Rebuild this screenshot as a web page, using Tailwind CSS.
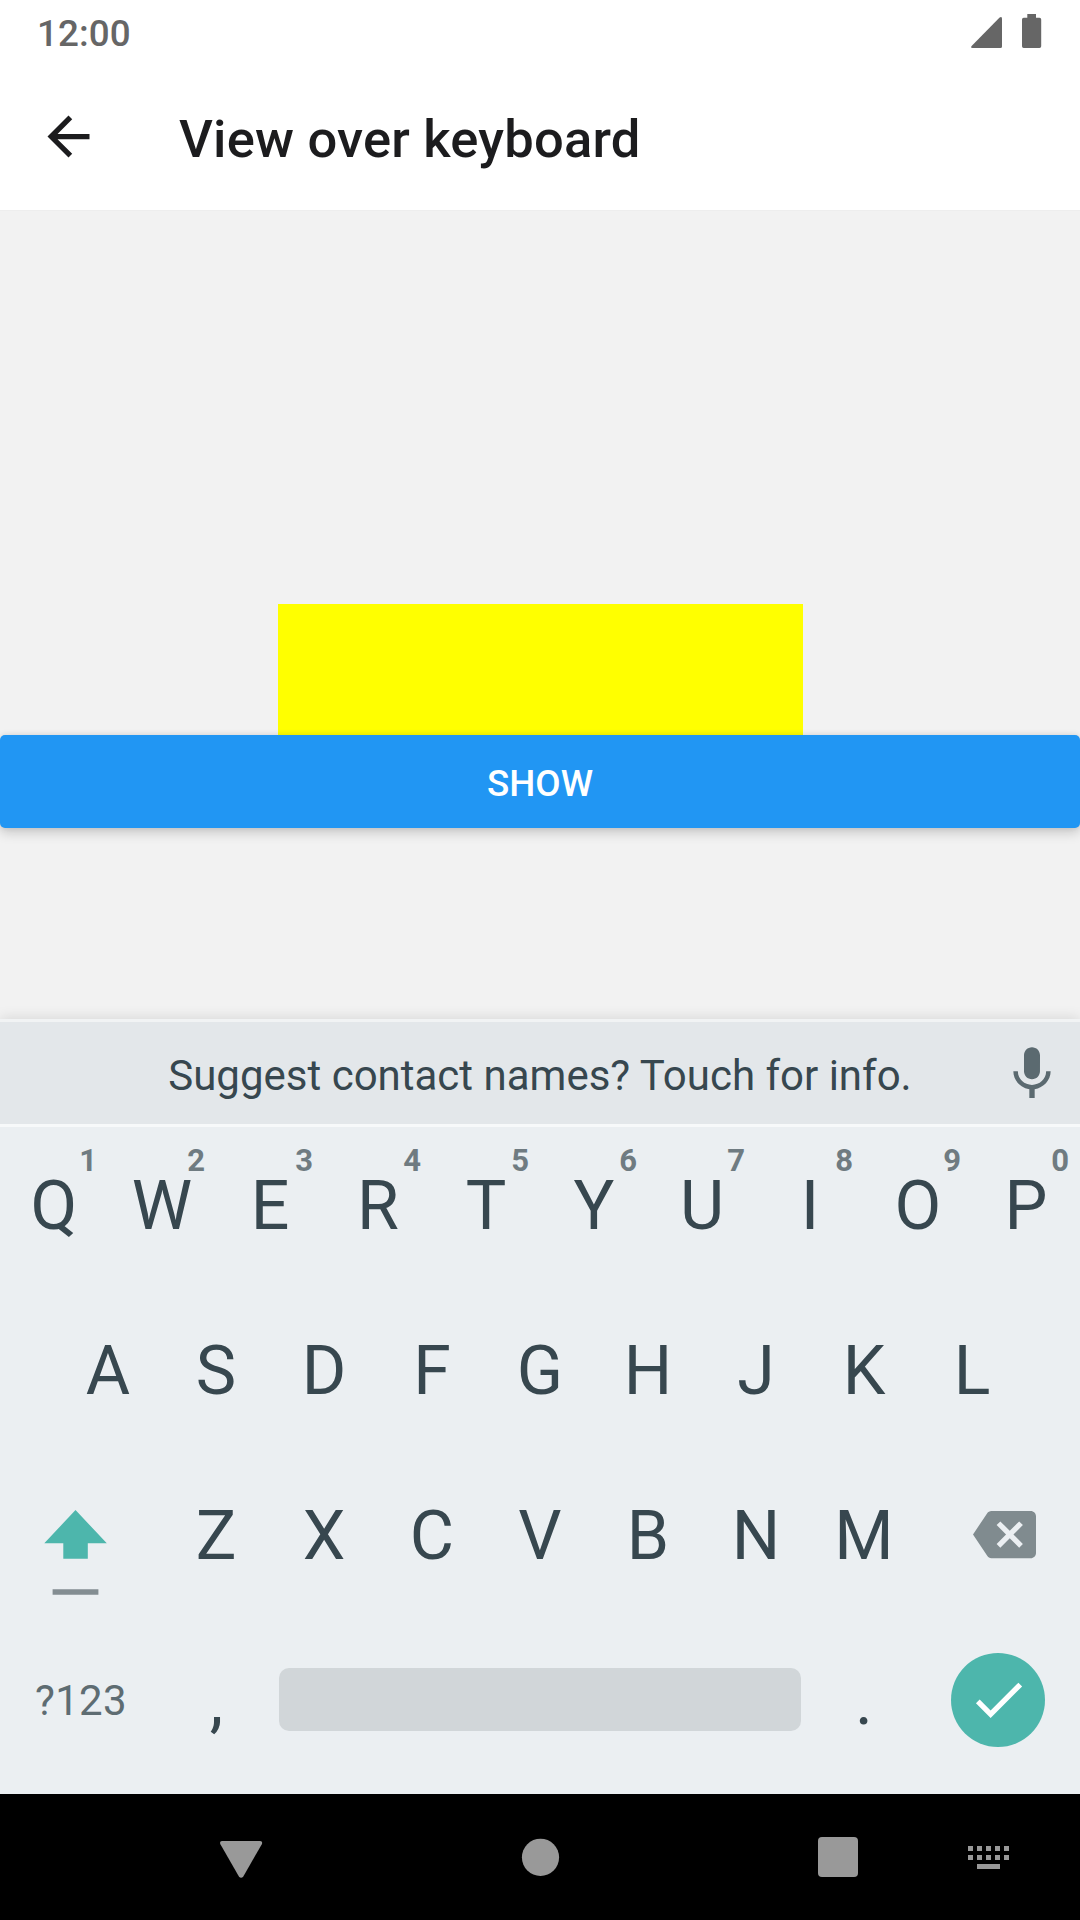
<!DOCTYPE html>
<html lang="en">
<head>
<meta charset="utf-8">
<title>View over keyboard</title>
<script src="https://cdn.jsdelivr.net/npm/@tailwindcss/browser@4"></script>
</head>
<body class="w-[1080px] h-[1920px] overflow-hidden flex flex-col bg-[#f2f2f2] font-[Roboto,sans-serif]">
  <!-- Status bar -->
  <div class="h-[63px] shrink-0 bg-white flex justify-between pl-[37px] pr-[38px]">
    <span class="text-[36.75px] leading-[67px] font-medium tracking-[0.1px] text-[#666]">12:00</span>
    <div class="flex items-start gap-[20px] pt-[14px]">
      <svg class="w-[31px] h-[31px] mt-[3px]" viewBox="0 0 31 31" fill="#666"><path d="M28.600.5Q31-.9 31 1.600V29.500Q31 31 29.500 31H1.600Q-.8 31 .6 29Z"/></svg>
      <svg class="w-[20px] h-[34px]" viewBox="0 0 20 34" fill="#666"><path d="M5.300 0h8.700v3.800H17.500a1.700 1.700 0 0 1 1.700 1.700v26.700A1.700 1.700 0 0 1 17.500 33.900H1.700A1.700 1.700 0 0 1 0 32.200V5.500A1.700 1.700 0 0 1 1.700 3.800h3.600z"/></svg>
    </div>
  </div>
  <!-- App bar -->
  <header class="h-[147px] shrink-0 bg-white flex items-center pl-[37px] gap-[79px]">
    <svg class="w-[63px] h-[63px]" viewBox="0 0 24 24" fill="#1c1c1e"><path d="M20 11H7.830l5.590-5.590L12 4l-8 8 8 8 1.410-1.410L7.830 13H20v-2z"/></svg>
    <h1 class="text-[52.5px] leading-[60px] font-medium tracking-[0.2px] text-[#1c1c1e] pt-[5px]">View over keyboard</h1>
  </header>
  <!-- Content -->
  <main class="h-[809px] shrink-0 flex flex-col items-center border-t border-[#eee] pt-[393px]">
    <div class="w-[525px] h-[131px] shrink-0 bg-[#ff0] ml-px"></div>
    <button class="w-full h-[93px] shrink-0 rounded-[5px] bg-[#2196f3] text-white text-[36.75px] font-medium leading-[93px] pt-[3px] shadow-[0_5px_12px_rgba(0,0,0,0.17),0_0_6px_rgba(0,0,0,0.09)] relative flex items-center justify-center">SHOW</button>
  </main>
  <!-- Keyboard -->
  <section class="h-[775px] shrink-0 flex flex-col bg-[#ebeff2] text-[#37474f] shadow-[0_-2px_12px_rgba(0,0,0,0.1)]">
    <div class="h-[108px] shrink-0 border-y-[3px] border-t-[#f1f3f4] border-b-[#f7f9fa] bg-[#e3e7ea] flex items-center pl-[80px] pr-[16px]">
      <span class="flex-1 text-center text-[42px] leading-[50px] pt-[6px] whitespace-nowrap">Suggest contact names? Touch for info.</span>
      <svg class="w-[64px] h-[64px] mt-px" viewBox="0 0 24 24" fill="#5b6a70"><path d="M12 14c1.660 0 2.990-1.340 2.990-3L15 5c0-1.660-1.340-3-3-3S9 3.340 9 5v6c0 1.660 1.340 3 3 3zm5.300-3c0 3-2.540 5.100-5.300 5.100S6.700 14 6.700 11H5c0 3.410 2.720 6.230 6 6.720V21h2v-3.280c3.280-.48 6-3.300 6-6.720h-1.700z"/></svg>
    </div>
    <div id="row1" class="h-[161px] shrink-0 flex text-[68px] leading-[159px]"></div>
    <div id="row2" class="h-[165px] shrink-0 flex px-[54px] text-[68px] leading-[167px]"></div>
    <div class="h-[165px] shrink-0 flex text-[68px] leading-[167px]">
      <div class="w-[162px] flex flex-col items-start pt-[57px] pl-[44px]">
        <svg class="w-[63px] h-[86px]" viewBox="0 0 63 86"><path fill="#4db6ac" d="M31.500 0 62.800 33.300H43.800V48.800H19.300V33.300H.3Z"/><path fill="#838d92" d="M8.600 79.200h45.800v5.600H8.600z"/></svg>
      </div>
      <div id="row3" class="flex"></div>
      <div class="flex items-start pt-[50px] pl-[55px]">
        <svg class="w-[63px] h-[63px]" viewBox="0 0 24 24" fill="#808b8f"><path d="M22 3H7c-.69 0-1.230.35-1.590.88L0 12l5.410 8.110c.36.53.9.89 1.590.89h15c1.100 0 2-.9 2-2V5c0-1.100-.9-2-2-2zm-3 12.590L17.590 17 14 13.410 10.410 17 9 15.590 12.590 12 9 8.410 10.410 7 14 10.590 17.590 7 19 8.410 15.410 12 19 15.590z"/></svg>
      </div>
    </div>
    <div class="h-[176px] shrink-0 pb-[13px] flex items-center leading-[163px]">
      <div class="w-[162px] text-center text-[42px] tracking-[0.3px] text-[#5e6c72] pt-[2px]">?123</div>
      <div class="w-[108px] text-center text-[68px] pt-[4px] pl-px">,</div>
      <div class="w-[522px] h-[63px] mx-[9px] rounded-[10px] bg-[#d1d6d9]"></div>
      <div class="w-[108px] text-center text-[68px] pt-[4px]">.</div>
      <div class="w-[162px] flex items-center pl-[33px]">
        <div class="w-[94px] h-[94px] rounded-full bg-[#4db6ac] flex items-center justify-center">
          <svg class="w-[63px] h-[63px]" viewBox="0 0 24 24" fill="#fff"><path d="M9 16.170 4.830 12l-1.420 1.410L9 19 21 7l-1.410-1.410z"/></svg>
        </div>
      </div>
    </div>
  </section>
  <!-- Navigation bar -->
  <nav class="h-[126px] shrink-0 bg-black">
    <svg class="w-[1080px] h-[126px]" viewBox="0 0 1080 126" fill="#999">
      <path d="M222 47h38.200q2.800.2 1.600 3.200L243.300 82.500q-2.200 2.600-4.400 0L220.400 50.200Q219.200 47.200 222 47z"/>
      <circle cx="540.500" cy="63.300" r="18.600"/>
      <rect x="818" y="43" width="40" height="40" rx="4"/>
      <path d="M968 52h5v5h-5zm9 0h5v5h-5zm9 0h5v5h-5zm9 0h5v5h-5zm9 0h5v5h-5zM968 61h5v5h-5zm9 0h5v5h-5zm9 0h5v5h-5zm9 0h5v5h-5zm9 0h5v5h-5zM977 70h23v5h-23z"/>
    </svg>
  </nav>
<script>
  const fill = (id, letters, hints = "") => {
    document.getElementById(id).innerHTML = [...letters].map((c, i) =>
      `<div class="relative w-[108px] text-center">${c}${hints[i] ? `<span class="absolute right-[11px] top-[16px] text-[31px] leading-[36px] font-bold text-[#6f7b81]">${hints[i]}</span>` : ""}</div>`).join("");
  };
  fill("row1", "QWERTYUIOP", "1234567890");
  fill("row2", "ASDFGHJKL");
  fill("row3", "ZXCVBNM");
</script>
</body>
</html>
